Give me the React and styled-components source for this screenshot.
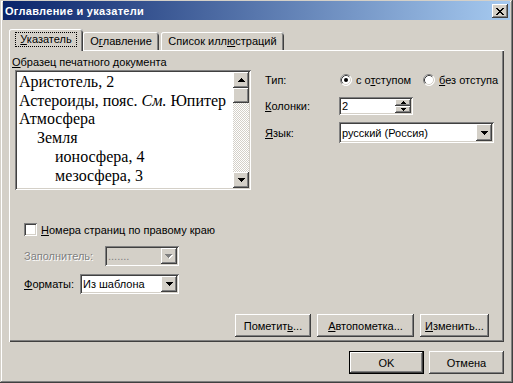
import React from 'react';
import styled, { createGlobalStyle, css } from 'styled-components';

const GlobalStyle = createGlobalStyle`
  html, body { margin: 0; padding: 0; background: #d4d0c8; }
  body { font-family: "Liberation Sans", Arial, sans-serif; font-size: 11px; color: #000; }
  * { box-sizing: border-box; }
`;

const raised = css`
  box-shadow: inset -1px -1px #404040, inset 1px 1px #fff, inset -2px -2px #808080, inset 2px 2px #d4d0c8;
`;
const sunken = css`
  box-shadow: inset 1px 1px #808080, inset -1px -1px #fff, inset 2px 2px #404040, inset -2px -2px #d4d0c8;
`;

const Window = styled.div`
  width: 513px;
  height: 383px;
  background: #d4d0c8;
  box-shadow: inset -1px -1px #404040, inset 1px 1px #d4d0c8, inset -2px -2px #808080, inset 2px 2px #fff;
  padding: 1px 3px 3px 3px;
  display: flex;
  flex-direction: column;
  overflow: hidden;
`;

const TitleBar = styled.div`
  height: 19px;
  display: flex;
  align-items: center;
  padding: 0 2px 0 2px;
  background: linear-gradient(to right, #0a246a, #a6caf0);
  color: #fff;
  font-weight: bold;
  font-size: 11px;
`;

const TitleText = styled.span`
  flex: 1;
  letter-spacing: 0.3px;
`;

const CloseBtn = styled.div`
  width: 16px;
  height: 14px;
  background: #d4d0c8;
  ${raised};
  display: flex;
  align-items: center;
  justify-content: center;
  margin-top: 1px;
`;

const Body = styled.div`
  flex: 1;
  display: flex;
  flex-direction: column;
  padding: 9px 6px 0 6px;
`;

const TabsRow = styled.div`
  display: flex;
  align-items: flex-end;
  height: 21px;
  position: relative;
  z-index: 1;
`;

const Tab = styled.div`
  width: ${p => p.$w}px;
  height: ${p => (p.$active ? 22 : 18)}px;
  margin-bottom: ${p => (p.$active ? -1 : 0)}px;
  margin-right: ${p => p.$mr || 0}px;
  background: #d4d0c8;
  border-radius: 3px 3px 0 0;
  box-shadow: inset 1px 0 #fff, inset 0 1px #fff, inset -1px 0 #404040, inset -2px 0 #808080;
  display: flex;
  align-items: center;
  justify-content: center;
  padding-bottom: ${p => (p.$active ? 2 : 0)}px;
  white-space: nowrap;
`;

const FocusText = styled.span`
  outline: 1px dotted #000;
  padding: 0 4px;
  line-height: 13px;
`;

const Acc = styled.u`
  text-decoration: underline;
  text-underline-offset: 1px;
`;

const Panel = styled.div`
  height: 292px;
  background: #d4d0c8;
  box-shadow: inset 1px 1px #fff, inset -1px -1px #404040, inset -2px -2px #808080;
  padding: 6px 15px 5px 3px;
  display: flex;
  flex-direction: column;
`;

const TopSection = styled.div`
  display: flex;
`;

const LeftCol = styled.div`
  width: 253px;
  flex: none;
  display: flex;
  flex-direction: column;
`;

const Caption = styled.div`
  height: 13px;
  line-height: 13px;
  white-space: nowrap;
`;

const Preview = styled.div`
  margin: 1px 0 0 3px;
  width: 236px;
  height: 120px;
  background: #fff;
  ${sunken};
  padding: 2px;
  display: flex;
`;

const PreviewText = styled.div`
  flex: 1;
  padding: 1px 0 0 2px;
  font-family: "Liberation Serif", "Times New Roman", serif;
  font-size: 16px;
  line-height: 18.7px;
  overflow: hidden;
  white-space: nowrap;
`;

const PLine = styled.div`
  padding-left: ${p => p.$level * 18}px;
`;

const ScrollBar = styled.div`
  width: 16px;
  display: flex;
  flex-direction: column;
`;

const ScrollBtn = styled.div`
  width: 16px;
  height: ${p => p.$h || 16}px;
  background: #d4d0c8;
  ${raised};
  display: flex;
  align-items: center;
  justify-content: center;
`;

const Track = styled.div`
  flex: 1;
  background: conic-gradient(#fff 25%, #d4d0c8 0 50%, #fff 0 75%, #d4d0c8 0);
  background-size: 2px 2px;
`;

const RightCol = styled.div`
  flex: 1;
  padding-top: 17px;
  display: flex;
  flex-direction: column;
`;

const FieldRow = styled.div`
  display: flex;
  align-items: center;
  height: ${p => p.$h}px;
  margin-top: ${p => p.$mt || 0}px;
  white-space: nowrap;
`;

const FieldLabel = styled.div`
  width: ${p => p.$w}px;
  flex: none;
  color: ${p => (p.$disabled ? '#808080' : '#000')};
  text-shadow: ${p => (p.$disabled ? '1px 1px #fff' : 'none')};
`;

const RadioOption = styled.div`
  display: flex;
  align-items: center;
  gap: 4px;
  flex: none;
  width: ${p => (p.$w ? `${p.$w}px` : 'auto')};
`;

const SpinBox = styled.div`
  width: 74px;
  height: 18px;
  background: #fff;
  ${sunken};
  padding: 2px;
  display: flex;
`;

const FieldValue = styled.div`
  flex: 1;
  padding-left: 1px;
  display: flex;
  align-items: center;
  color: ${p => (p.$disabled ? '#808080' : '#000')};
  overflow: hidden;
`;

const SpinBtns = styled.div`
  width: 16px;
  display: flex;
  flex-direction: column;
`;

const SpinBtn = styled.div`
  flex: 1;
  background: #d4d0c8;
  ${raised};
  display: flex;
  align-items: center;
  justify-content: center;
`;

const Combo = styled.div`
  width: ${p => p.$w}px;
  height: ${p => p.$h}px;
  background: ${p => (p.$disabled ? '#d4d0c8' : '#fff')};
  ${sunken};
  padding: 2px;
  display: flex;
  flex: none;
`;

const DropBtn = styled.div`
  width: 16px;
  background: #d4d0c8;
  ${raised};
  display: flex;
  align-items: center;
  justify-content: center;
`;

const LowerSection = styled.div`
  margin-top: 33px;
  padding-left: 12px;
  display: flex;
  flex-direction: column;
`;

const CheckRow = styled.div`
  display: flex;
  align-items: center;
  gap: 4px;
  height: 13px;
  white-space: nowrap;
`;

const CheckBox = styled.div`
  width: 13px;
  height: 13px;
  background: #fff;
  ${sunken};
`;

const ButtonRow = styled.div`
  margin-top: ${p => (p.$auto ? 'auto' : `${p.$mt}px`)};
  display: flex;
  justify-content: flex-end;
  gap: ${p => p.$gap}px;
`;

const Button = styled.div`
  width: ${p => p.$w}px;
  height: 23px;
  background: #d4d0c8;
  display: flex;
  align-items: center;
  justify-content: center;
  white-space: nowrap;
  ${p =>
    p.$default
      ? css`box-shadow: inset 0 0 0 1px #000, inset -2px -2px #404040, inset 2px 2px #fff, inset -3px -3px #808080;`
      : raised};
`;

const Pixels = ({ rows, color = '#000', shadow }) => {
  const w = rows[0].length;
  const h = rows.length;
  const rects = [];
  rows.forEach((r, y) =>
    r.split('').forEach((c, x) => {
      if (c === '#') rects.push([x, y]);
    })
  );
  return (
    <svg width={w + (shadow ? 1 : 0)} height={h + (shadow ? 1 : 0)} shapeRendering="crispEdges">
      {shadow && rects.map(([x, y], i) => <rect key={'s' + i} x={x + 1} y={y + 1} width="1" height="1" fill={shadow} />)}
      {rects.map(([x, y], i) => <rect key={i} x={x} y={y} width="1" height="1" fill={color} />)}
    </svg>
  );
};

const DOWN = ['#######', '.#####.', '..###..', '...#...'];
const UP = ['...#...', '..###..', '.#####.', '#######'];
const SUP = ['..#..', '.###.', '#####'];
const SDOWN = ['#####', '.###.', '..#..'];
const XGLYPH = ['##....##', '.##..##.', '..####..', '...##...', '..####..', '.##..##.', '##....##'];

const Radio = ({ checked }) => (
  <svg width="12" height="12" viewBox="0 0 12 12">
    <circle cx="6" cy="6" r="5.5" fill="#fff" />
    <path d="M2.11 9.89 A5.5 5.5 0 0 1 9.89 2.11" fill="none" stroke="#808080" strokeWidth="1" />
    <path d="M9.89 2.11 A5.5 5.5 0 0 1 2.11 9.89" fill="none" stroke="#fff" strokeWidth="1" />
    <path d="M2.82 9.18 A4.5 4.5 0 0 1 9.18 2.82" fill="none" stroke="#404040" strokeWidth="1" />
    <path d="M9.18 2.82 A4.5 4.5 0 0 1 2.82 9.18" fill="none" stroke="#d4d0c8" strokeWidth="1" />
    {checked && <circle cx="6" cy="6" r="2" fill="#000" />}
  </svg>
);

export default function App() {
  return (
    <>
      <GlobalStyle />
      <Window>
        <TitleBar>
          <TitleText>Оглавление и указатели</TitleText>
          <CloseBtn>
            <Pixels rows={XGLYPH} />
          </CloseBtn>
        </TitleBar>
        <Body>
          <TabsRow>
            <Tab $w={74} $active>
              <FocusText>
                <Acc>У</Acc>казатель
              </FocusText>
            </Tab>
            <Tab $w={76} $mr={2}>
              О<Acc>г</Acc>лавление
            </Tab>
            <Tab $w={123}>
              Список илл<Acc>ю</Acc>страций
            </Tab>
          </TabsRow>
          <Panel>
            <TopSection>
              <LeftCol>
                <Caption>
                  <Acc>О</Acc>бразец печатного документа
                </Caption>
                <Preview>
                  <PreviewText>
                    <PLine $level={0}>Аристотель, 2</PLine>
                    <PLine $level={0}>
                      Астероиды, пояс. <i>См.</i> Юпитер
                    </PLine>
                    <PLine $level={0}>Атмосфера</PLine>
                    <PLine $level={1}>Земля</PLine>
                    <PLine $level={2}>ионосфера, 4</PLine>
                    <PLine $level={2}>мезосфера, 3</PLine>
                  </PreviewText>
                  <ScrollBar>
                    <ScrollBtn>
                      <Pixels rows={UP} />
                    </ScrollBtn>
                    <ScrollBtn $h={15} />
                    <Track />
                    <ScrollBtn>
                      <Pixels rows={DOWN} />
                    </ScrollBtn>
                  </ScrollBar>
                </Preview>
              </LeftCol>
              <RightCol>
                <FieldRow $h={14}>
                  <FieldLabel $w={75}>Тип:</FieldLabel>
                  <RadioOption $w={83}>
                    <Radio checked />
                    <span>
                      с о<Acc>т</Acc>ступом
                    </span>
                  </RadioOption>
                  <RadioOption>
                    <Radio />
                    <span>
                      <Acc>б</Acc>ез отступа
                    </span>
                  </RadioOption>
                </FieldRow>
                <FieldRow $h={18} $mt={10}>
                  <FieldLabel $w={74}>
                    <Acc>К</Acc>олонки:
                  </FieldLabel>
                  <SpinBox>
                    <FieldValue>2</FieldValue>
                    <SpinBtns>
                      <SpinBtn>
                        <Pixels rows={SUP} />
                      </SpinBtn>
                      <SpinBtn>
                        <Pixels rows={SDOWN} />
                      </SpinBtn>
                    </SpinBtns>
                  </SpinBox>
                </FieldRow>
                <FieldRow $h={21} $mt={7}>
                  <FieldLabel $w={74}>
                    <Acc>Я</Acc>зык:
                  </FieldLabel>
                  <Combo $w={155} $h={21}>
                    <FieldValue>русский (Россия)</FieldValue>
                    <DropBtn>
                      <Pixels rows={DOWN} />
                    </DropBtn>
                  </Combo>
                </FieldRow>
              </RightCol>
            </TopSection>
            <LowerSection>
              <CheckRow>
                <CheckBox />
                <span>
                  <Acc>Н</Acc>омера страниц по правому краю
                </span>
              </CheckRow>
              <FieldRow $h={20} $mt={10}>
                <FieldLabel $w={81} $disabled>
                  Заполнитель:
                </FieldLabel>
                <Combo $w={74} $h={20} $disabled>
                  <FieldValue $disabled>.......</FieldValue>
                  <DropBtn>
                    <Pixels rows={DOWN} color="#808080" shadow="#fff" />
                  </DropBtn>
                </Combo>
              </FieldRow>
              <FieldRow $h={20} $mt={8}>
                <FieldLabel $w={56}>
                  <Acc>Ф</Acc>орматы:
                </FieldLabel>
                <Combo $w={99} $h={20}>
                  <FieldValue>Из шаблона</FieldValue>
                  <DropBtn>
                    <Pixels rows={DOWN} />
                  </DropBtn>
                </Combo>
              </FieldRow>
            </LowerSection>
            <ButtonRow $auto $gap={6}>
              <Button $w={76}>
                Пометит<Acc>ь</Acc>...
              </Button>
              <Button $w={97}>
                <Acc>А</Acc>втопометка...
              </Button>
              <Button $w={69}>
                <Acc>И</Acc>зменить...
              </Button>
            </ButtonRow>
          </Panel>
          <ButtonRow $mt={9} $gap={5}>
            <Button $w={75} $default>
              OK
            </Button>
            <Button $w={75}>Отмена</Button>
          </ButtonRow>
        </Body>
      </Window>
    </>
  );
}
